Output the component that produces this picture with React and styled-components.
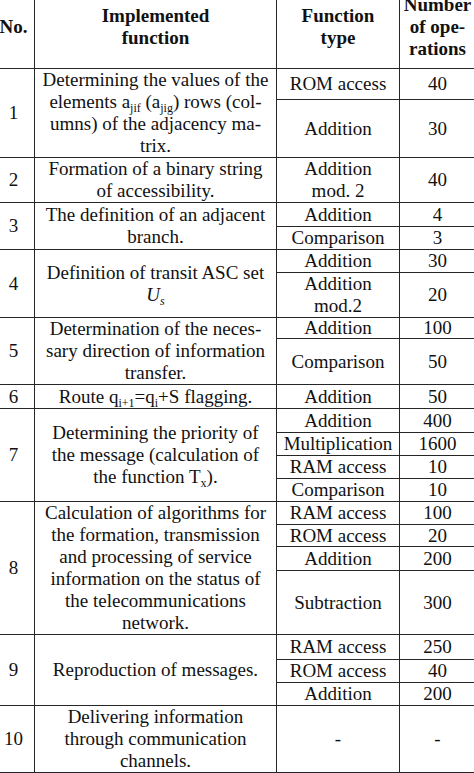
import React from 'react';
import styled, { createGlobalStyle } from 'styled-components';

const GlobalStyle = createGlobalStyle`
  html, body {
    margin: 0;
    padding: 0;
    background: #fff;
    overflow: hidden;
  }
  body {
    font-family: "Liberation Serif", "Times New Roman", serif;
    color: #111;
  }
`;

const LINE = '#262626';

const Table = styled.div`
  width: 483px;
  margin-left: -8px;
  font-size: 19px;
  line-height: 22px;
  border-left: 1px solid ${LINE};
`;

const Row = styled.div`
  display: flex;
  align-items: stretch;
  border-bottom: 1px solid ${LINE};
  min-height: ${(p) => p.minH || 0}px;
`;

const Cell = styled.div`
  box-sizing: border-box;
  width: ${(p) => p.w}px;
  flex: 0 0 ${(p) => p.w}px;
  display: flex;
  align-items: center;
  justify-content: center;
  text-align: center;
  border-right: 1px solid ${LINE};
  padding-bottom: ${(p) => p.pb || 0}px;
  font-weight: ${(p) => (p.bold ? 700 : 400)};
  white-space: nowrap;
`;

const HeadRow = styled(Row)`
  height: 69px;
  box-sizing: border-box;
`;

const SubList = styled.div`
  display: flex;
  flex-direction: column;
  flex: 1;
`;

const SubRow = styled.div`
  display: flex;
  box-sizing: border-box;
  height: ${(p) => (p.h ? `${p.h}px` : 'auto')};
  flex: ${(p) => (p.h ? '0 0 auto' : '1 0 auto')};
  border-bottom: ${(p) => (p.h ? `1px solid ${LINE}` : 'none')};
`;

const Sub = styled.sub`
  font-size: 12px;
  line-height: 0;
  vertical-align: -4px;
`;

const W = { no: 42, fn: 242, type: 123, count: 76 };

const rows = [
  {
    no: '1',
    fn: (
      <>
        Determining the values of the
        <br />
        elements a<Sub>jif</Sub> (a<Sub>jig</Sub>) rows (col-
        <br />
        umns) of the adjacency ma-
        <br />
        trix.
      </>
    ),
    ops: [
      { type: 'ROM access', n: '40', h: 31 },
      { type: 'Addition', n: '30' },
    ],
  },
  {
    no: '2',
    fn: (
      <>
        Formation of a binary string
        <br />
        of accessibility.
      </>
    ),
    ops: [
      {
        type: (
          <>
            Addition
            <br />
            mod. 2
          </>
        ),
        n: '40',
      },
    ],
  },
  {
    no: '3',
    fn: (
      <>
        The definition of an adjacent
        <br />
        branch.
      </>
    ),
    ops: [
      { type: 'Addition', n: '4', h: 24 },
      { type: 'Comparison', n: '3' },
    ],
  },
  {
    no: '4',
    fn: (
      <>
        Definition of transit ASC set
        <br />
        <i>
          U<Sub>s</Sub>
        </i>
      </>
    ),
    ops: [
      { type: 'Addition', n: '30', h: 23 },
      {
        type: (
          <>
            Addition
            <br />
            mod.2
          </>
        ),
        n: '20',
      },
    ],
  },
  {
    no: '5',
    fn: (
      <>
        Determination of the neces-
        <br />
        sary direction of information
        <br />
        transfer.
      </>
    ),
    ops: [
      { type: 'Addition', n: '100', h: 21 },
      { type: 'Comparison', n: '50' },
    ],
  },
  {
    no: '6',
    fn: (
      <>
        Route q<Sub>i+1</Sub>=q<Sub>i</Sub>+S flagging.
      </>
    ),
    minH: 23,
    ops: [{ type: 'Addition', n: '50' }],
  },
  {
    no: '7',
    fn: (
      <>
        Determining the priority of
        <br />
        the message (calculation of
        <br />
        the function T<Sub>x</Sub>).
      </>
    ),
    ops: [
      { type: 'Addition', n: '400', h: 24 },
      { type: 'Multiplication', n: '1600', h: 23 },
      { type: 'RAM access', n: '10', h: 23 },
      { type: 'Comparison', n: '10' },
    ],
  },
  {
    no: '8',
    fn: (
      <>
        Calculation of algorithms for
        <br />
        the formation, transmission
        <br />
        and processing of service
        <br />
        information on the status of
        <br />
        the telecommunications
        <br />
        network.
      </>
    ),
    ops: [
      { type: 'RAM access', n: '100', h: 23 },
      { type: 'ROM access', n: '20', h: 22 },
      { type: 'Addition', n: '200', h: 24 },
      { type: 'Subtraction', n: '300' },
    ],
  },
  {
    no: '9',
    fn: 'Reproduction of messages.',
    ops: [
      { type: 'RAM access', n: '250', h: 25 },
      { type: 'ROM access', n: '40', h: 23 },
      { type: 'Addition', n: '200' },
    ],
  },
  {
    no: '10',
    fn: (
      <>
        Delivering information
        <br />
        through communication
        <br />
        channels.
      </>
    ),
    ops: [{ type: '-', n: '-' }],
  },
];

export default function App() {
  return (
    <>
      <GlobalStyle />
      <Table>
        <HeadRow>
          <Cell w={W.no} bold pb={14}>
            No.
          </Cell>
          <Cell w={W.fn} bold pb={14}>
            Implemented
            <br />
            function
          </Cell>
          <Cell w={W.type} bold pb={14}>
            Function
            <br />
            type
          </Cell>
          <Cell w={W.count} bold pb={14}>
            Number
            <br />
            of ope-
            <br />
            rations
          </Cell>
        </HeadRow>
        {rows.map((r) => (
          <Row key={r.no} minH={r.minH}>
            <Cell w={W.no}>{r.no}</Cell>
            <Cell w={W.fn}>
              <div>{r.fn}</div>
            </Cell>
            <SubList>
              {r.ops.map((op, i) => (
                <SubRow key={i} h={op.h}>
                  <Cell w={W.type}>
                    <div>{op.type}</div>
                  </Cell>
                  <Cell w={W.count}>{op.n}</Cell>
                </SubRow>
              ))}
            </SubList>
          </Row>
        ))}
      </Table>
    </>
  );
}
